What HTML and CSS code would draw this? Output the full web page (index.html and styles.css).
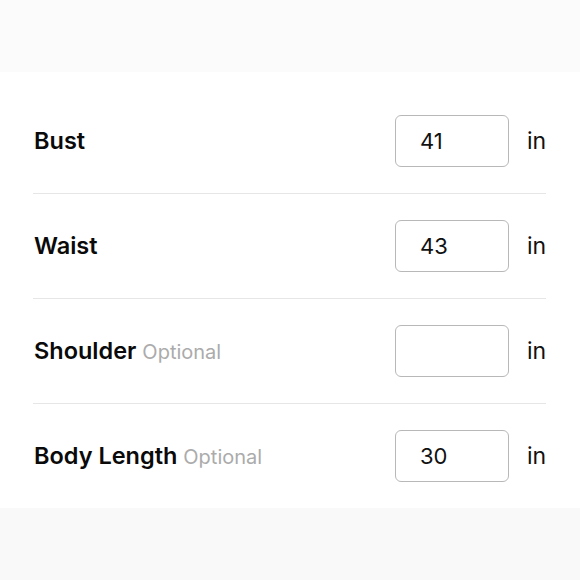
FILE: index.html
```html
<!DOCTYPE html>
<html>
<head>
<meta charset="utf-8">
<link rel="stylesheet" href="styles.css">
</head>
<body>
<div class="band band-top"></div>
<main class="list">
  <div class="row">
    <div class="label">Bust</div>
    <div class="field"><input class="box" type="text" value="41"></div>
    <div class="unit">in</div>
  </div>
  <div class="row">
    <div class="label">Waist</div>
    <div class="field"><input class="box" type="text" value="43"></div>
    <div class="unit">in</div>
  </div>
  <div class="row">
    <div class="label">Shoulder <span class="opt">Optional</span></div>
    <div class="field"><input class="box" type="text" value=""></div>
    <div class="unit">in</div>
  </div>
  <div class="row">
    <div class="label">Body Length <span class="opt">Optional</span></div>
    <div class="field"><input class="box" type="text" value="30"></div>
    <div class="unit">in</div>
  </div>
</main>
<div class="band band-bottom"></div>
</body>
</html>
```
FILE: styles.css
```css
* { box-sizing: border-box; }
html, body { margin: 0; padding: 0; background: #ffffff; }
body {
  font-family: Inter, "Noto Sans", sans-serif;
  color: #0a0a0a;
  width: 580px;
  height: 580px;
  overflow: hidden;
}
.band { background: #fbfbfb; }
.band-top { height: 72px; }
.band-bottom { height: 72px; background: #f9f9f9; }
.list {
  padding: 17px 34px 0 33px;
}
.row {
  display: flex;
  align-items: center;
  padding: 26px 0;
  border-bottom: 1px solid #e6e6e6;
}
.row:last-child { border-bottom: none; padding-bottom: 26px; }
.label {
  flex: 1;
  font-size: 23.5px;
  font-weight: 600;
  letter-spacing: 0;
  padding-left: 1px;
  line-height: 1.2;
}
.opt {
  font-size: 20px;
  font-weight: 400;
  color: #ababab;
}
.field { display: flex; }
.box {
  width: 114px;
  height: 52px;
  border: 1px solid #b8b8b8;
  border-radius: 6px;
  padding: 0 0 0 24px;
  font-family: Inter, "Noto Sans", sans-serif;
  font-size: 22px;
  color: #111111;
  background: #fff;
  outline: none;
}
.unit {
  margin-left: 18px;
  font-size: 23px;
  color: #111111;
  width: 19px;
}
```
